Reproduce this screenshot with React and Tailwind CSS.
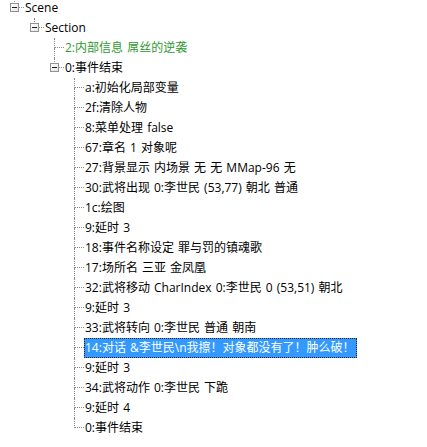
const rows = [
  { level: 0, text: 'Scene', box: true, last: true },
  { level: 1, text: 'Section', box: true, last: true },
  { level: 2, text: '2:内部信息 屌丝的逆袭', green: true },
  { level: 2, text: '0:事件结束', box: true, last: true },
  { level: 3, text: 'a:初始化局部变量' },
  { level: 3, text: '2f:清除人物' },
  { level: 3, text: '8:菜单处理 false' },
  { level: 3, text: '67:章名 1 对象呢' },
  { level: 3, text: '27:背景显示 内场景 无 无 MMap-96 无' },
  { level: 3, text: '30:武将出现 0:李世民 (53,77) 朝北 普通' },
  { level: 3, text: '1c:绘图' },
  { level: 3, text: '9:延时 3' },
  { level: 3, text: '18:事件名称设定 罪与罚的镇魂歌' },
  { level: 3, text: '17:场所名 三亚 金凤凰' },
  { level: 3, text: '32:武将移动 CharIndex 0:李世民 0 (53,51) 朝北' },
  { level: 3, text: '9:延时 3' },
  { level: 3, text: '33:武将转向 0:李世民 普通 朝南' },
  { level: 3, text: '14:对话 &李世民\\n我擦！对象都没有了！肿么破！', selected: true },
  { level: 3, text: '9:延时 3' },
  { level: 3, text: '34:武将动作 0:李世民 下跪' },
  { level: 3, text: '9:延时 4' },
  { level: 3, text: '0:事件结束', last: true },
];

const TreeRow = ({ level, text, box, last, green, selected }) => {
  return (
    <div className="flex h-5 pl-[4px]">
      {Array.from({ length: level }).map((_, i) => (
        <div key={i} className="w-5 shrink-0" />
      ))}
      {/* connector lines + expand box */}
      <div className="relative flex w-5 shrink-0">
        <div className="flex w-[11px] flex-col">
          <div className="h-[10px] border-r border-dotted border-[#8c8c8c]" />
          <div className={last ? 'h-[10px]' : 'h-[10px] border-r border-dotted border-[#8c8c8c]'} />
        </div>
        <div className="flex flex-1 flex-col">
          <div className="h-[10px] border-b border-dotted border-[#8c8c8c]" />
        </div>
        {box && (
          <div className="absolute left-[6px] top-[5px] flex h-[9px] w-[9px] items-center justify-center border border-[#919191] bg-gradient-to-br from-white to-[#e4e4e4]">
            <div className="h-px w-[5px] bg-[#1a1a1a]" />
          </div>
        )}
      </div>
      <div
        className={
          selected
            ? 'flex h-5 items-center whitespace-nowrap border border-dotted border-[#222] bg-[#3399ff] pr-[1px] text-white'
            : green
            ? 'flex h-5 items-center whitespace-nowrap border border-transparent pr-[1px] text-[#2f9a2f]'
            : 'flex h-5 items-center whitespace-nowrap border border-transparent pr-[1px] text-black'
        }
      >
        {text}
      </div>
    </div>
  );
};

export default function App() {
  return (
    <div className="h-[447px] w-[427px] overflow-hidden bg-white font-['Open_Sans','Noto_Sans_CJK_SC',sans-serif] text-[12px] leading-5 [word-spacing:1px]">
      <div className="-mt-[2px] flex flex-col">
        {rows.map((r, i) => (
          <TreeRow key={i} {...r} />
        ))}
      </div>
    </div>
  );
}
